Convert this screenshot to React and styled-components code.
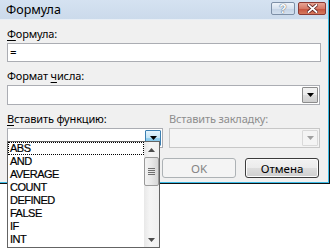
import React from "react";
import styled, { createGlobalStyle } from "styled-components";

const Global = createGlobalStyle`
  html, body { margin: 0; padding: 0; background: #fff; }
  body { font-family: "Noto Sans", "Open Sans", sans-serif; }
`;

const functions = ["ABS", "AND", "AVERAGE", "COUNT", "DEFINED", "FALSE", "IF", "INT"];

const Arrow = ({ color = "#000" }) => (
  <svg width="7" height="4" viewBox="0 0 7 4">
    <path d="M0 0h7L3.5 4z" fill={color} />
  </svg>
);

const App = () => {
  return (
    <Page>
      <Global />
      <Window>
        <Frame>
          <TitleBar>
            <Title>Формула</Title>
            <Caption>
              <HelpBtn>?</HelpBtn>
              <CloseBtn>
                <svg width="11" height="9" viewBox="0 0 11 9">
                  <path
                    d="M1.5 1 L9.5 8 M9.5 1 L1.5 8"
                    stroke="#5a2020"
                    strokeWidth="3.4"
                    strokeLinecap="square"
                  />
                  <path
                    d="M1.5 1 L9.5 8 M9.5 1 L1.5 8"
                    stroke="#fff"
                    strokeWidth="1.8"
                    strokeLinecap="square"
                  />
                </svg>
              </CloseBtn>
            </Caption>
          </TitleBar>
          <Body>
            <Label>
              <u>Ф</u>ормула:
            </Label>
            <TextBox>=</TextBox>
            <Label>
              Формат <u>ч</u>исла:
            </Label>
            <Combo>
              <ComboBtn>
                <Arrow />
              </ComboBtn>
            </Combo>
            <Columns>
              <Column>
                <Label>
                  <u>В</u>ставить функцию:
                </Label>
                <Combo>
                  <ComboBtn $hot>
                    <Arrow />
                  </ComboBtn>
                </Combo>
              </Column>
              <Column>
                <Label $disabled>Вставить закладку:</Label>
                <Combo $disabled>
                  <ComboBtn $disabled>
                    <Arrow color="#a0a0a0" />
                  </ComboBtn>
                </Combo>
              </Column>
            </Columns>
            <Buttons>
              <Button $disabled>OK</Button>
              <Button $default>Отмена</Button>
            </Buttons>
          </Body>
        </Frame>
        <DropList>
          <Items>
            {functions.map((f, i) => (
              <Item key={f} $focus={i === 0}>
                {f}
              </Item>
            ))}
          </Items>
          <ScrollBar>
            <ScrollArrow>
              <svg width="7" height="4" viewBox="0 0 7 4">
                <path d="M3.5 0L7 4H0z" fill="#4d4d4d" />
              </svg>
            </ScrollArrow>
            <Thumb>
              <Grip />
              <Grip />
              <Grip />
              <Grip />
            </Thumb>
            <Track />
            <ScrollArrow>
              <svg width="7" height="4" viewBox="0 0 7 4">
                <path d="M0 0h7L3.5 4z" fill="#4d4d4d" />
              </svg>
            </ScrollArrow>
          </ScrollBar>
        </DropList>
      </Window>
    </Page>
  );
};

const Page = styled.div`
  width: 330px;
  height: 252px;
  position: relative;
  overflow: hidden;
`;

const Window = styled.div`
  position: relative;
  width: 330px;
  height: 184px;
  box-sizing: border-box;
  border-right: 1px solid #111;
  border-bottom: 1px solid #111;
`;

const Frame = styled.div`
  height: 100%;
  box-sizing: border-box;
  border-right: 1px solid #3bbbe6;
  border-bottom: 1px solid #3bbbe6;
  padding-right: 2px;
  padding-bottom: 1px;
  background: #f0f0f0;
  display: flex;
  flex-direction: column;
`;

const TitleBar = styled.div`
  height: 19px;
  background: linear-gradient(#d5e2f1, #cbdaeb);
  display: flex;
  align-items: center;
  justify-content: space-between;
  padding: 0 2px 0 6px;
  margin-right: -2px;
  border-bottom: 1px solid #e8eef5;
`;

const Title = styled.div`
  font-size: 12.5px;
  color: #000;
  margin-top: -1px;
`;

const Caption = styled.div`
  display: flex;
  gap: 3px;
  align-self: flex-start;
  margin-top: 2px;
`;

const HelpBtn = styled.div`
  width: 24px;
  height: 13px;
  box-sizing: border-box;
  border: 1px solid #7d8fa6;
  border-radius: 2px;
  background: linear-gradient(#eef3f9 0%, #d6e1ee 50%, #c3d2e4 51%, #d3e0ef 100%);
  font-family: "Liberation Sans", sans-serif;
  font-size: 12px;
  font-weight: bold;
  color: #fff;
  text-shadow: 0 0 1px #4d5b6e, 0 0 1px #4d5b6e;
  display: flex;
  align-items: center;
  justify-content: center;
  line-height: 1;
`;

const CloseBtn = styled.div`
  width: 28px;
  height: 13px;
  box-sizing: border-box;
  border: 1px solid #8a3a34;
  border-radius: 2px;
  background: linear-gradient(#e8a493 0%, #d67a68 50%, #c5503b 51%, #d67a5e 100%);
  display: flex;
  align-items: center;
  justify-content: center;
`;

const Body = styled.div`
  flex: 1;
  display: flex;
  flex-direction: column;
  padding: 0 0 0 7px;
`;

const Label = styled.div`
  font-size: 11px;
  letter-spacing: -0.15px;
  line-height: 14px;
  height: 14px;
  margin: 7px 0 2px 0;
  color: ${(p) => (p.$disabled ? "#8d8d8d" : "#000")};
  white-space: nowrap;
  u {
    text-decoration-thickness: 1px;
    text-underline-offset: 2px;
  }
`;

const TextBox = styled.div`
  width: 314px;
  height: 19px;
  box-sizing: border-box;
  border: 1px solid #abadb3;
  background: #fff;
  font-size: 11.5px;
  line-height: 16px;
  padding-left: 2px;
`;

const Combo = styled.div`
  height: 20px;
  box-sizing: border-box;
  border: 1px solid ${(p) => (p.$disabled ? "#c7c7c7" : "#abadb3")};
  background: ${(p) => (p.$disabled ? "#f4f4f4" : "#fff")};
  display: flex;
  justify-content: flex-end;
  padding: 1px;
  width: ${(p) => (p.$disabled ? "151px" : "auto")};
  margin-right: 6px;
`;

const ComboBtn = styled.div`
  width: 16px;
  box-sizing: border-box;
  border: 1px solid
    ${(p) => (p.$hot ? "#3c7fb1" : p.$disabled ? "#d9d9d9" : "#8c8c8c")};
  border-radius: 1px;
  background: ${(p) =>
    p.$hot
      ? "linear-gradient(#e5f4fc 0%, #c4e5f6 50%, #98d1ef 51%, #6cbbe5 100%)"
      : p.$disabled
      ? "#f4f4f4"
      : "linear-gradient(#f2f2f2 0%, #ebebeb 50%, #dddddd 51%, #cfcfcf 100%)"};
  display: flex;
  align-items: center;
  justify-content: center;
`;

const Columns = styled.div`
  display: grid;
  grid-template-columns: 162px 155px;
`;

const Column = styled.div`
  display: flex;
  flex-direction: column;
`;

const Buttons = styled.div`
  display: flex;
  gap: 9px;
  padding-left: 155px;
  margin-top: 10px;
`;

const Button = styled.div`
  width: 74px;
  height: 20px;
  box-sizing: border-box;
  border: 1px solid ${(p) => (p.$disabled ? "#adb2b5" : "#3c3c3c")};
  border-radius: 3px;
  background: ${(p) =>
    p.$disabled
      ? "#f4f4f4"
      : "linear-gradient(#f2f2f2 0%, #ebebeb 50%, #dddddd 51%, #cfcfcf 100%)"};
  box-shadow: ${(p) => (p.$default ? "inset 0 0 0 1px #fcfcfc" : "none")};
  color: ${(p) => (p.$disabled ? "#838383" : "#000")};
  font-size: 11.5px;
  display: flex;
  align-items: center;
  justify-content: center;
`;

const DropList = styled.div`
  position: absolute;
  left: 7px;
  top: 141px;
  width: 153px;
  height: 107px;
  box-sizing: border-box;
  border: 1px solid #646464;
  background: #fff;
  display: flex;
`;

const Items = styled.div`
  flex: 1;
  display: flex;
  flex-direction: column;
`;

const Item = styled.div`
  height: 13px;
  line-height: 13px;
  padding-left: 2px;
  font-family: "Liberation Sans", Arial, sans-serif;
  font-size: 11px;
  letter-spacing: -0.5px;
  color: #000;
  -webkit-text-stroke: 0.2px #000;
  outline: ${(p) => (p.$focus ? "1px dotted #000" : "none")};
  outline-offset: -1px;
`;

const ScrollBar = styled.div`
  width: 15px;
  display: flex;
  flex-direction: column;
  background: linear-gradient(90deg, #e8e8e8, #f5f5f5 40%, #f0f0f0);
`;

const ScrollArrow = styled.div`
  height: 15px;
  display: flex;
  align-items: center;
  justify-content: center;
`;

const Thumb = styled.div`
  height: 29px;
  box-sizing: border-box;
  border: 1px solid #9a9a9a;
  border-radius: 2px;
  background: linear-gradient(90deg, #f3f3f3, #e8e8e8 50%, #d6d6d6);
  display: flex;
  flex-direction: column;
  align-items: center;
  justify-content: center;
  gap: 1px;
`;

const Grip = styled.div`
  width: 7px;
  height: 1px;
  background: #6f6f6f;
`;

const Track = styled.div`
  flex: 1;
`;

export default App;
